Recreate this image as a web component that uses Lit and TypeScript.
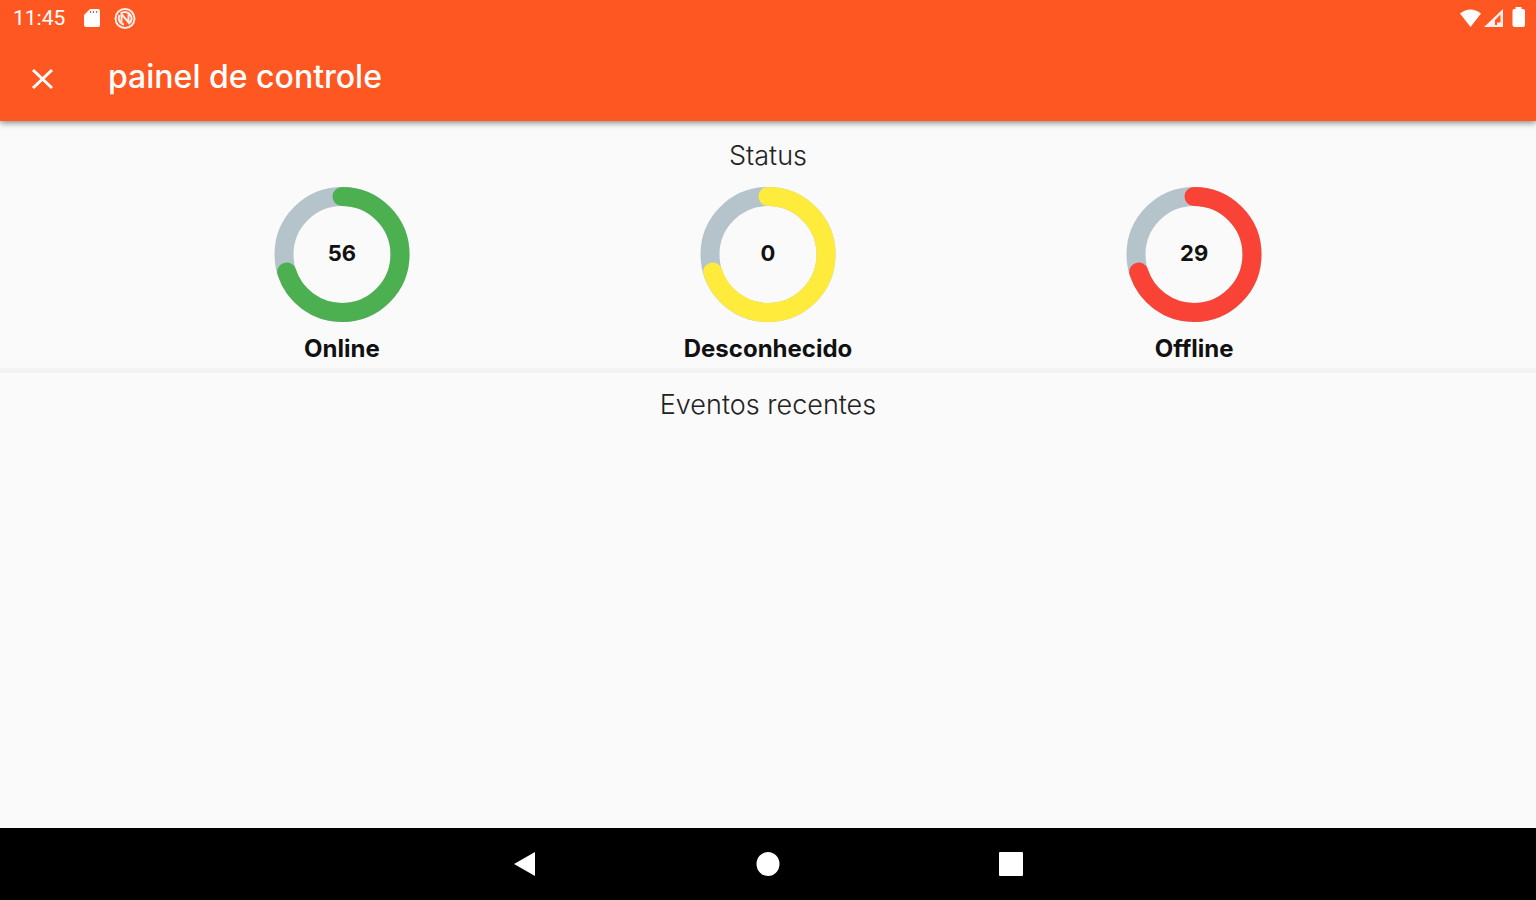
import { LitElement, html, css, svg } from "lit";
import { customElement, property } from "lit/decorators.js";

const RADIUS = 58;
const LENGTH = 2 * Math.PI * RADIUS;

@customElement("status-gauge")
class StatusGauge extends LitElement {
  @property() label = "";
  @property() tone = "online";
  @property({ type: Number }) value = 0;
  @property({ type: Number }) share = 0.7;

  static styles = css`
    :host { display: flex; flex-direction: column; align-items: center; color: #111; font-weight: 700; }
    .ring { display: grid; place-items: center; }
    .ring > * { grid-area: 1 / 1; }
    svg { display: block; width: 136px; height: 136px; }
    circle { fill: none; stroke-width: 19; }
    .track { stroke: #b5c4ca; }
    .arc { stroke-linecap: round; }
    .online { stroke: #4caf50; }
    .unknown { stroke: #ffeb3b; }
    .offline { stroke: #f94336; }
    .value { font-size: 22px; line-height: 28px; padding-bottom: 4px; }
    .label { font-size: 24px; line-height: 32px; margin-top: 10px; }
  `;

  render() {
    return html`
      <div class="ring">
        <svg viewBox="0 0 136 136" aria-hidden="true">
          <circle class="track" cx="68" cy="67.500" r=${RADIUS}></circle>
          ${svg`<circle class="arc ${this.tone}" cx="68" cy="67.500" r=${RADIUS}
            transform="rotate(-90 68 67.500)"
            stroke-dasharray="${LENGTH * this.share} ${LENGTH}"></circle>`}
        </svg>
        <span class="value">${this.value}</span>
      </div>
      <span class="label">${this.label}</span>
    `;
  }
}

@customElement("app-root")
class AppRoot extends LitElement {
  static styles = css`
    :host {
      display: flex;
      flex-direction: column;
      min-height: 100vh;
      background: #fafafa;
      color: #222;
      font-family: Inter, "Open Sans", sans-serif;
    }
    svg { display: block; fill: currentColor; }
    header {
      background: #ff5722;
      color: #fff;
      box-shadow: 0 2px 6px rgba(0, 0, 0, 0.45);
    }
    .system { display: flex; align-items: center; height: 36px; padding: 0 8px 0 13px; }
    .time { font: 400 21px/36px Roboto, sans-serif; margin-right: 18px; }
    .notices { display: flex; align-items: center; gap: 10px; flex: 1; }
    .signals { display: flex; align-items: center; }
    .bar { display: flex; align-items: center; height: 85px; padding-left: 20px; gap: 44px; }
    button { border: 0; padding: 0; margin: 0; background: none; color: inherit; cursor: pointer; }
    h1 { margin: 0; padding-bottom: 4px; font-size: 32px; line-height: 40px; font-weight: 500; }
    main { flex: 1; }
    h2 { margin: 0; text-align: center; font-size: 27px; line-height: 34px; font-weight: 300; }
    .status { padding-top: 18px; border-bottom: 5px solid #f3f3f3; }
    .gauges { display: flex; justify-content: space-evenly; margin-top: 14px; padding-bottom: 3px; }
    status-gauge { min-width: 136px; }
    .events { padding-top: 15px; }
    nav {
      display: flex;
      align-items: center;
      justify-content: center;
      gap: 195px;
      height: 72px;
      background: #000;
      color: #fff;
    }
  `;

  render() {
    return html`
      <header>
        <div class="system">
          <span class="time">11:45</span>
          <div class="notices">
            <svg width="20" height="24" viewBox="0 0 20 24"><path fill-rule="evenodd" d="M7 3h8q2 0 2 2v14q0 2-2 2H3q-2 0-2-2V9zM7 5v2h1V5zM10 5v2h1V5zM13 5v2h1V5z"/></svg>
            <svg width="24" height="24" viewBox="0 0 24 24"><g fill="none" stroke="#fff" stroke-width="2" opacity="0.9"><circle cx="12" cy="12.500" r="9.500"/><path d="M8.500 17V8l7 8.500V8.500M8 7.500a6.500 6.500 0 0 1 9.500 1.500a6.500 6.500 0 0 1-1 8M6.500 9a6.500 6.500 0 0 0 4.500 9.500"/></g></svg>
          </div>
          <div class="signals">
            <svg width="24" height="24" viewBox="0 0 24 24"><path d="M0 7.500Q10.500-.5 21 7.500L10.500 21z"/></svg>
            <svg width="24" height="24" viewBox="0 0 24 24"><path fill-rule="evenodd" d="M0 21L19 3v18zM11 19H13v-2.500h3.500V8.500L11 14z" opacity="0.9"/></svg>
            <svg width="20" height="24" viewBox="0 0 20 24"><path d="M7.500 3V1h6v2h1.500Q17 3 17 5v14q0 2-2 2H6.500q-2 0-2-2V5q0-2 1.500-2z"/></svg>
          </div>
        </div>
        <div class="bar">
          <button aria-label="Fechar">
            <svg width="44" height="44" viewBox="0 0 44 44"><path d="M13 13L32 31M32 13L13 31" stroke="#fff" stroke-width="3"/></svg>
          </button>
          <h1>painel de controle</h1>
        </div>
      </header>
      <main>
        <section class="status">
          <h2>Status</h2>
          <div class="gauges">
            <status-gauge label="Online" tone="online" value="56"></status-gauge>
            <status-gauge label="Desconhecido" tone="unknown" value="0"></status-gauge>
            <status-gauge label="Offline" tone="offline" value="29"></status-gauge>
          </div>
        </section>
        <section class="events"><h2>Eventos recentes</h2></section>
      </main>
      <nav>
        <button aria-label="Voltar">
          <svg width="48" height="48" viewBox="0 0 48 48"><path d="M13 24L34 12V36z"/></svg>
        </button>
        <button aria-label="Início">
          <svg width="48" height="48" viewBox="0 0 48 48"><ellipse cx="24" cy="24" rx="11.500" ry="12"/></svg>
        </button>
        <button aria-label="Recentes">
          <svg width="48" height="48" viewBox="0 0 48 48"><rect x="12" y="12" width="24" height="24" rx="1"/></svg>
        </button>
      </nav>
    `;
  }
}
